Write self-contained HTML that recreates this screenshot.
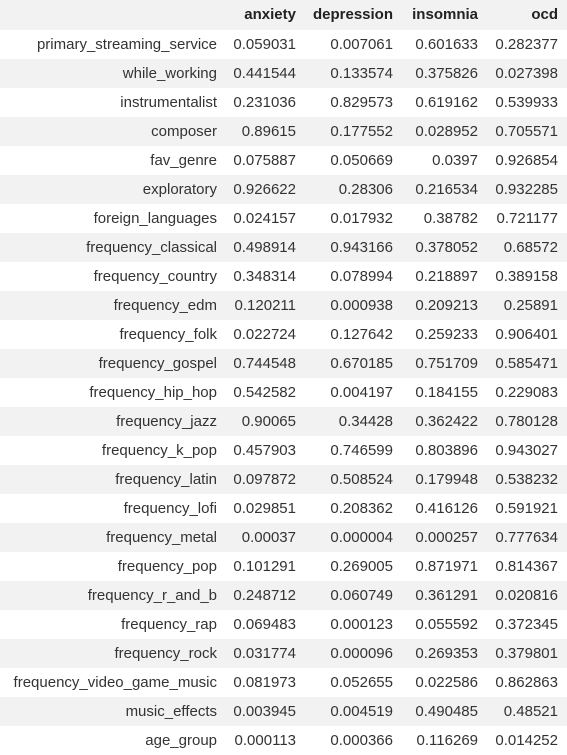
<!DOCTYPE html>
<html><head><meta charset="utf-8"><style>
body{margin:0;width:567px;height:754px;background:#fff;font-family:"Liberation Sans",sans-serif;font-size:15px;color:#333;overflow:hidden}
.r{display:flex;height:29px;line-height:29px;white-space:nowrap}
.r span{text-align:right;display:block}
.r span:nth-child(1){width:217px}
.r span:nth-child(2){width:79px}
.r span:nth-child(3){width:97px}
.r span:nth-child(4){width:85px}
.r span:nth-child(5){width:80px}
.h{height:30px;line-height:30px;background:#f2f2f2;font-weight:bold;color:#222}
.r:nth-child(odd){background:#f2f2f2}
</style></head><body>
<div class="r h"><span></span><span>anxiety</span><span>depression</span><span>insomnia</span><span>ocd</span></div>
<div class="r"><span>primary_streaming_service</span><span>0.059031</span><span>0.007061</span><span>0.601633</span><span>0.282377</span></div>
<div class="r"><span>while_working</span><span>0.441544</span><span>0.133574</span><span>0.375826</span><span>0.027398</span></div>
<div class="r"><span>instrumentalist</span><span>0.231036</span><span>0.829573</span><span>0.619162</span><span>0.539933</span></div>
<div class="r"><span>composer</span><span>0.89615</span><span>0.177552</span><span>0.028952</span><span>0.705571</span></div>
<div class="r"><span>fav_genre</span><span>0.075887</span><span>0.050669</span><span>0.0397</span><span>0.926854</span></div>
<div class="r"><span>exploratory</span><span>0.926622</span><span>0.28306</span><span>0.216534</span><span>0.932285</span></div>
<div class="r"><span>foreign_languages</span><span>0.024157</span><span>0.017932</span><span>0.38782</span><span>0.721177</span></div>
<div class="r"><span>frequency_classical</span><span>0.498914</span><span>0.943166</span><span>0.378052</span><span>0.68572</span></div>
<div class="r"><span>frequency_country</span><span>0.348314</span><span>0.078994</span><span>0.218897</span><span>0.389158</span></div>
<div class="r"><span>frequency_edm</span><span>0.120211</span><span>0.000938</span><span>0.209213</span><span>0.25891</span></div>
<div class="r"><span>frequency_folk</span><span>0.022724</span><span>0.127642</span><span>0.259233</span><span>0.906401</span></div>
<div class="r"><span>frequency_gospel</span><span>0.744548</span><span>0.670185</span><span>0.751709</span><span>0.585471</span></div>
<div class="r"><span>frequency_hip_hop</span><span>0.542582</span><span>0.004197</span><span>0.184155</span><span>0.229083</span></div>
<div class="r"><span>frequency_jazz</span><span>0.90065</span><span>0.34428</span><span>0.362422</span><span>0.780128</span></div>
<div class="r"><span>frequency_k_pop</span><span>0.457903</span><span>0.746599</span><span>0.803896</span><span>0.943027</span></div>
<div class="r"><span>frequency_latin</span><span>0.097872</span><span>0.508524</span><span>0.179948</span><span>0.538232</span></div>
<div class="r"><span>frequency_lofi</span><span>0.029851</span><span>0.208362</span><span>0.416126</span><span>0.591921</span></div>
<div class="r"><span>frequency_metal</span><span>0.00037</span><span>0.000004</span><span>0.000257</span><span>0.777634</span></div>
<div class="r"><span>frequency_pop</span><span>0.101291</span><span>0.269005</span><span>0.871971</span><span>0.814367</span></div>
<div class="r"><span>frequency_r_and_b</span><span>0.248712</span><span>0.060749</span><span>0.361291</span><span>0.020816</span></div>
<div class="r"><span>frequency_rap</span><span>0.069483</span><span>0.000123</span><span>0.055592</span><span>0.372345</span></div>
<div class="r"><span>frequency_rock</span><span>0.031774</span><span>0.000096</span><span>0.269353</span><span>0.379801</span></div>
<div class="r"><span>frequency_video_game_music</span><span>0.081973</span><span>0.052655</span><span>0.022586</span><span>0.862863</span></div>
<div class="r"><span>music_effects</span><span>0.003945</span><span>0.004519</span><span>0.490485</span><span>0.48521</span></div>
<div class="r"><span>age_group</span><span>0.000113</span><span>0.000366</span><span>0.116269</span><span>0.014252</span></div>
</body></html>
